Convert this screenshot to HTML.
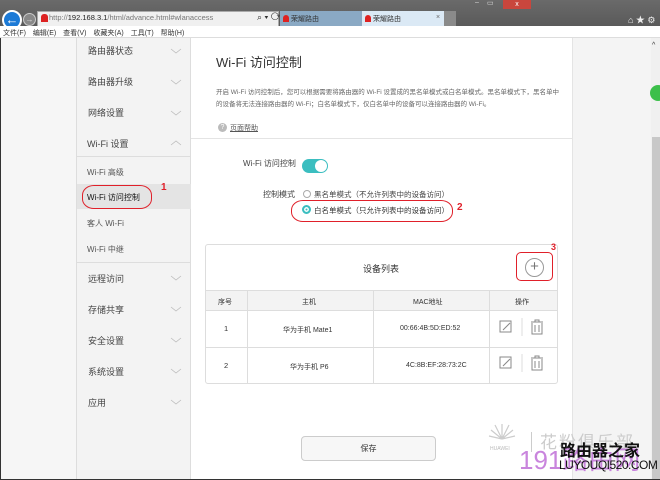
<!DOCTYPE html>
<html><head><meta charset="utf-8"><style>
*{margin:0;padding:0;box-sizing:border-box}
body{width:660px;height:480px;overflow:hidden;position:relative;font-family:"Liberation Sans","Noto Sans CJK SC",sans-serif;background:#f6f6f6;color:#333}
.a{position:absolute}
.t{font-size:8px;white-space:nowrap}
</style></head><body>
<div class="a" style="left:0;top:0;width:660px;height:26px;background:linear-gradient(#6a6a6a,#5a5a5a)"></div>
<div class="a" style="left:2px;top:10px;width:20px;height:20px;border-radius:50%;background:#1c7ad6;border:2px solid #fff;color:#fff;font-size:13px;line-height:15px;text-align:center;font-weight:bold">←</div>
<div class="a" style="left:23px;top:13px;width:13px;height:13px;border-radius:50%;background:#888;border:1px solid #ccc;color:#ddd;font-size:8px;line-height:11px;text-align:center">→</div>
<div class="a" style="left:37px;top:11px;width:242px;height:16px;background:#f0f0f0;border:1px solid #aaa"></div>
<div class="a" style="left:41px;top:14px;width:7px;height:8px;background:#d22;border-radius:3px 3px 0 0"></div>
<div class="a t" style="left:49px;top:13px;font-size:7.5px;color:#777">http://<b style="color:#222;font-weight:normal">192.168.3.1</b>/html/advance.html#wlanaccess</div>
<div class="a t" style="left:257px;top:12px;color:#333;font-size:9px">⌕ ▾ ⟳</div>
<div class="a" style="left:280px;top:11px;width:82px;height:16px;background:#8aa9c4"></div>
<div class="a" style="left:283px;top:15px;width:6px;height:7px;background:#d22;border-radius:3px 3px 0 0"></div>
<div class="a t" style="left:291px;top:14px;font-size:7px">荣耀路由</div>
<div class="a" style="left:362px;top:11px;width:82px;height:16px;background:#dbe9f5"></div>
<div class="a" style="left:365px;top:15px;width:6px;height:7px;background:#d22;border-radius:3px 3px 0 0"></div>
<div class="a t" style="left:373px;top:14px;font-size:7px">荣耀路由</div>
<div class="a t" style="left:436px;top:14px;font-size:7px;color:#666">×</div>
<div class="a" style="left:444px;top:11px;width:12px;height:16px;background:#8a8a8a"></div>
<div class="a" style="left:503px;top:0;width:28px;height:9px;background:#c9463d;color:#fff;font-size:7px;text-align:center;line-height:9px">x</div>
<div class="a t" style="left:487px;top:-1px;color:#ddd;font-size:7px">▭</div>
<div class="a t" style="left:475px;top:-1px;color:#ddd;font-size:7px">–</div>
<div class="a t" style="left:628px;top:13px;color:#eee;font-size:9px">⌂ ★ ⚙</div>
<div class="a" style="left:0;top:26px;width:660px;height:12px;background:#fff;border-bottom:1px solid #ddd"></div>
<div class="a t" style="left:3px;top:28px;font-size:7px;word-spacing:5px">文件(F) 编辑(E) 查看(V) 收藏夹(A) 工具(T) 帮助(H)</div>
<div class="a" style="left:0;top:38px;width:1px;height:442px;background:#333"></div>
<div class="a" style="left:0;top:479px;width:660px;height:1px;background:#333"></div>
<div class="a" style="left:76px;top:38px;width:115px;height:441px;background:#f3f3f3;border-left:1px solid #ddd;border-right:1px solid #ddd"></div>
<div class="a" style="left:77px;top:156px;width:114px;height:1px;background:#ddd"></div>
<div class="a" style="left:77px;top:184px;width:114px;height:25px;background:#e4e4e4"></div>
<div class="a" style="left:77px;top:262px;width:114px;height:1px;background:#ddd"></div>
<div style="color:#444">
<div class="a t" style="left:88px;top:44px;font-size:9px">路由器状态</div>
<div class="a t" style="left:88px;top:75px;font-size:9px">路由器升级</div>
<div class="a t" style="left:88px;top:106px;font-size:9px">网络设置</div>
<div class="a t" style="left:87px;top:137px;font-size:9px">Wi-Fi 设置</div>
<div class="a t" style="left:88px;top:272px;font-size:9px">远程访问</div>
<div class="a t" style="left:88px;top:303px;font-size:9px">存储共享</div>
<div class="a t" style="left:88px;top:334px;font-size:9px">安全设置</div>
<div class="a t" style="left:88px;top:365px;font-size:9px">系统设置</div>
<div class="a t" style="left:88px;top:396px;font-size:9px">应用</div>
</div>
<div class="a t" style="left:87px;top:167px;color:#555">Wi-Fi 高级</div>
<div class="a t" style="left:87px;top:192px;color:#111">Wi-Fi 访问控制</div>
<div class="a t" style="left:87px;top:218px;color:#555">客人 Wi-Fi</div>
<div class="a t" style="left:87px;top:244px;color:#555">Wi-Fi 中继</div>
<svg class="a" style="left:170px;top:44px" width="12" height="370" fill="none" stroke="#bbb" stroke-width="0.8">
<path d="M1 5l5 4 5-4M1 36l5 4 5-4M1 67l5 4 5-4M1 101l5-4 5 4M1 232l5 4 5-4M1 263l5 4 5-4M1 294l5 4 5-4M1 325l5 4 5-4M1 356l5 4 5-4"/></svg>
<div class="a" style="left:82px;top:185px;width:70px;height:24px;border:1.5px solid #e0202a;border-radius:12px/10px"></div>
<div class="a t" style="left:161px;top:182px;color:#e0202a;font-size:10px;font-weight:bold">1</div>
<div class="a" style="left:191px;top:38px;width:381px;height:441px;background:#fff"></div>
<div class="a" style="left:191px;top:138px;width:381px;height:1px;background:#e4e4e4"></div>
<div class="a t" style="left:216px;top:52px;font-size:13px;color:#333">Wi-Fi 访问控制</div>
<div class="a" style="left:216px;top:87px;font-size:6.5px;line-height:12px;color:#666;width:345px">开启 Wi-Fi 访问控制后，您可以根据需要将路由器的 Wi-Fi 设置成的黑名单模式或白名单模式。黑名单模式下，黑名单中的设备将无法连接路由器的 Wi-Fi；白名单模式下，仅白名单中的设备可以连接路由器的 Wi-Fi。</div>
<div class="a" style="left:218px;top:123px;width:9px;height:9px;border-radius:50%;background:#bbb;color:#fff;font-size:7px;line-height:9px;text-align:center">?</div>
<div class="a t" style="left:230px;top:123px;font-size:7px;color:#555;text-decoration:underline">页面帮助</div>
<div class="a t" style="left:243px;top:158px;color:#444">Wi-Fi 访问控制</div>
<div class="a" style="left:302px;top:159px;width:26px;height:14px;border-radius:7px;background:#3bbec0"></div>
<div class="a" style="left:315px;top:160px;width:12px;height:12px;border-radius:50%;background:#fff"></div>
<div class="a t" style="left:263px;top:189px;color:#444">控制模式</div>
<div class="a" style="left:303px;top:190px;width:8px;height:8px;border-radius:50%;border:1px solid #aaa"></div>
<div class="a t" style="left:314px;top:189px;color:#444;font-size:7.5px">黑名单模式（不允许列表中的设备访问）</div>
<div class="a" style="left:302px;top:205px;width:9px;height:9px;border-radius:50%;background:#3bbec0;border:2px solid #3bbec0;box-shadow:inset 0 0 0 1.5px #fff"></div>
<div class="a t" style="left:314px;top:205px;color:#333;font-size:7.5px">白名单模式（只允许列表中的设备访问）</div>
<div class="a" style="left:291px;top:200px;width:162px;height:22px;border:1.5px solid #e0202a;border-radius:12px/10px"></div>
<div class="a t" style="left:457px;top:202px;color:#e0202a;font-size:10px;font-weight:bold">2</div>
<div class="a" style="left:205px;top:244px;width:353px;height:140px;border:1px solid #ddd;border-radius:3px;overflow:hidden;background:#fff">
 <div class="a" style="left:0;top:45px;width:353px;height:21px;background:#f3f3f3;border-top:1px solid #ddd;border-bottom:1px solid #ddd"></div>
 <div class="a" style="left:0;top:102px;width:353px;height:1px;background:#ddd"></div>
 <div class="a" style="left:41px;top:45px;width:1px;height:95px;background:#ddd"></div>
 <div class="a" style="left:167px;top:45px;width:1px;height:95px;background:#ddd"></div>
 <div class="a" style="left:283px;top:45px;width:1px;height:95px;background:#ddd"></div>
</div>
<div class="a t" style="left:363px;top:262px;font-size:9px">设备列表</div>
<div class="a" style="left:525px;top:258px;width:19px;height:19px;border-radius:50%;border:1px solid #999;text-align:center;line-height:16px;font-size:15px;color:#777">+</div>
<div class="a" style="left:516px;top:252px;width:37px;height:29px;border:1.5px solid #e0202a;border-radius:5px"></div>
<div class="a t" style="left:551px;top:242px;color:#e0202a;font-size:9px;font-weight:bold">3</div>
<div class="a t" style="left:218px;top:297px;font-size:7px">序号</div>
<div class="a t" style="left:302px;top:297px;font-size:7px">主机</div>
<div class="a t" style="left:413px;top:297px;font-size:7px">MAC地址</div>
<div class="a t" style="left:515px;top:297px;font-size:7px">操作</div>
<div class="a t" style="left:224px;top:324px;font-size:7.5px">1</div>
<div class="a t" style="left:283px;top:325px;font-size:7px">华为手机 Mate1</div>
<div class="a t" style="left:400px;top:325px;font-size:7px">00:66:4B:5D:ED:52</div>
<div class="a t" style="left:224px;top:361px;font-size:7.5px">2</div>
<div class="a t" style="left:290px;top:362px;font-size:7px">华为手机 P6</div>
<div class="a t" style="left:406px;top:362px;font-size:7px">4C:8B:EF:28:73:2C</div>
<svg class="a" style="left:498px;top:318px" width="50" height="60" fill="none" stroke="#888" stroke-width="1">
<rect x="2" y="3" width="11" height="11"/><path d="M5 12l7-7"/>
<path d="M24 0v18M24 36v18" stroke="#ddd"/>
<path d="M33 4h12M37 4V2h4v2M34 5v11h10V5M37 7v7M41 7v7"/>
<rect x="2" y="39" width="11" height="11"/><path d="M5 48l7-7"/>
<path d="M33 40h12M37 40v-2h4v2M34 41v11h10V41M37 43v7M41 43v7"/>
</svg>
<div class="a" style="left:301px;top:436px;width:135px;height:25px;border:1px solid #ccc;border-radius:4px;background:#f7f7f7;text-align:center;line-height:23px;font-size:8px">保存</div>
<div class="a" style="left:572px;top:38px;width:79px;height:441px;background:#f4f4f4;border-left:1px solid #e4e4e4"></div>
<div class="a" style="left:651px;top:38px;width:9px;height:441px;background:#f0f0f0"></div>
<div class="a" style="left:652px;top:137px;width:8px;height:342px;background:#c8c8c8"></div>
<div class="a t" style="left:652px;top:42px;font-size:7px">^</div>
<div class="a" style="left:650px;top:85px;width:16px;height:16px;border-radius:50%;background:#3cbf4a"></div>
<svg class="a" style="left:488px;top:423px" width="28" height="22" fill="none" stroke="#ccc" stroke-width="1.2"><path d="M14 16L7 2M14 16L3 7M14 16L1 13M14 16L21 2M14 16L25 7M14 16L27 13M14 16V1"/></svg>
<div class="a t" style="left:490px;top:446px;font-size:5px;color:#bbb">HUAWEI</div>
<div class="a" style="left:531px;top:432px;width:1px;height:20px;background:#ccc"></div>
<div class="a t" style="left:540px;top:428px;font-size:17px;color:#ccc;letter-spacing:2px">花粉俱乐部</div>
<div class="a t" style="left:519px;top:440px;font-size:26px;color:#c070d8;opacity:.85">191路由网</div>
<div class="a t" style="left:560px;top:437px;font-size:16px;font-weight:bold;color:#111">路由器之家</div>
<div class="a t" style="left:559px;top:458px;font-size:12px;color:#111;letter-spacing:-0.5px">LUYOUQI520.COM</div>
</body></html>
